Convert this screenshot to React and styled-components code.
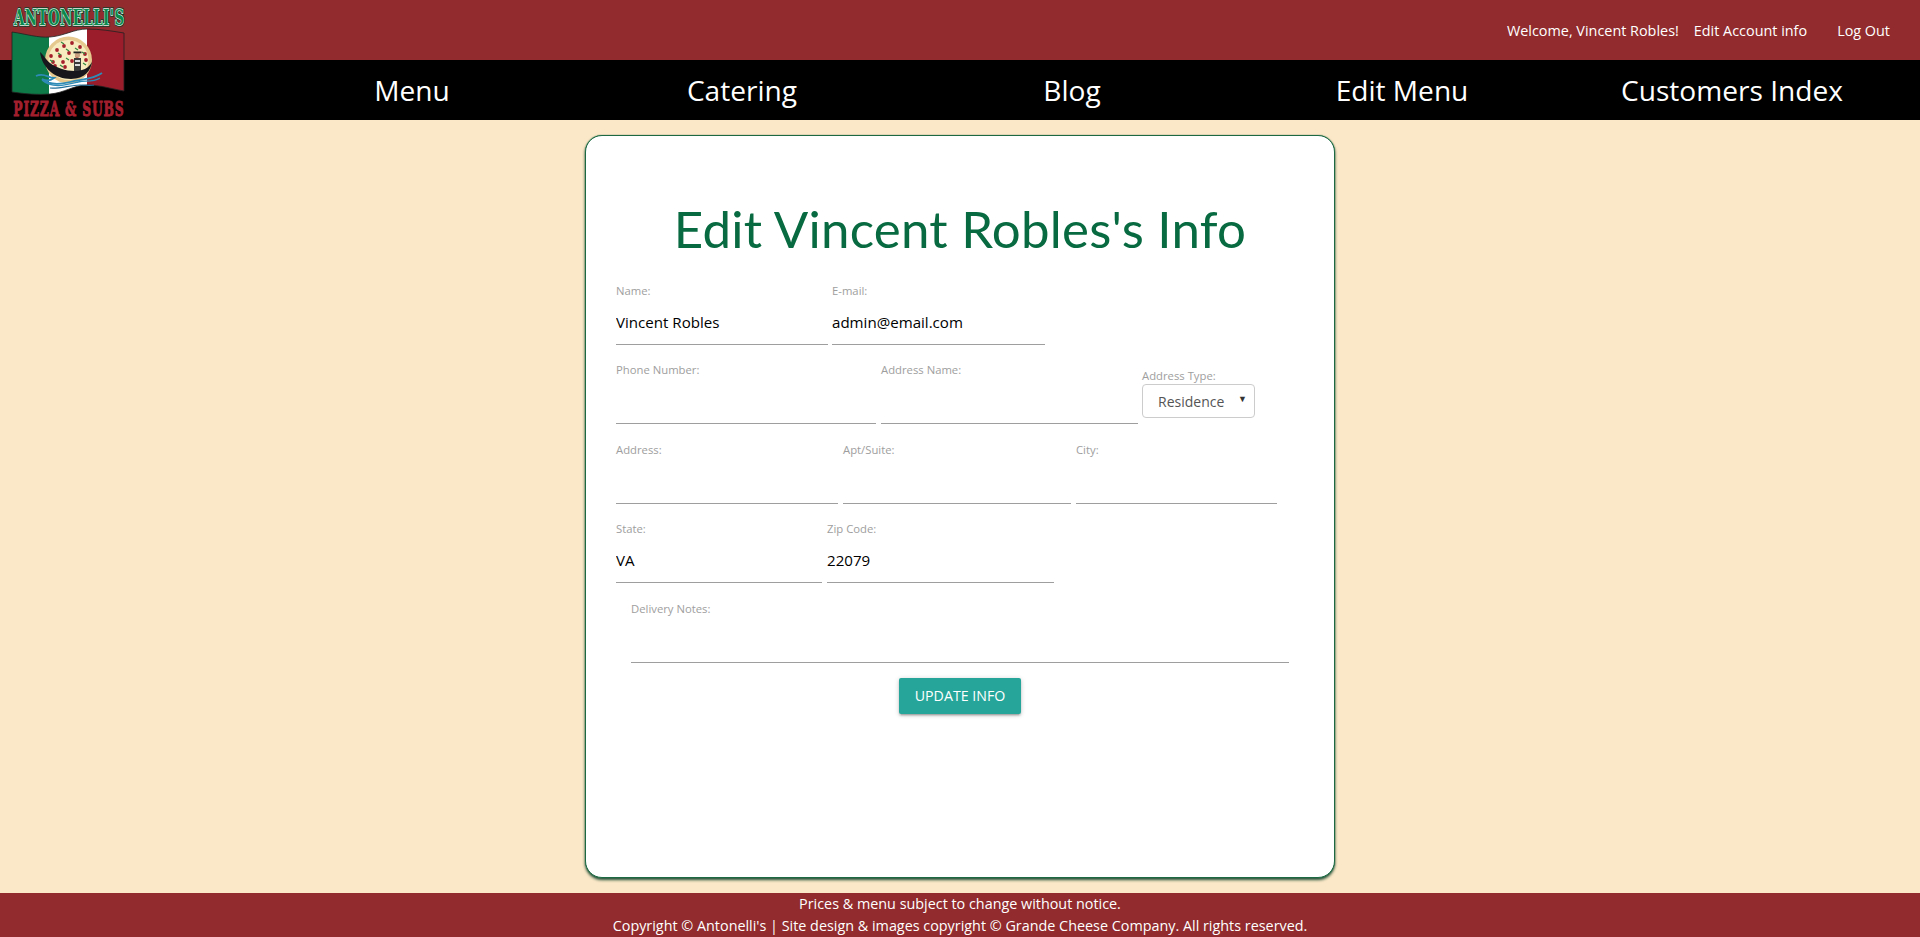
import React from "react";
import styled, { createGlobalStyle } from "styled-components";

const Global = createGlobalStyle`
  html, body { margin: 0; padding: 0; background: #fbe8c8; }
  body { font-family: "Open Sans", "Noto Sans", sans-serif; overflow: hidden; }
  * { box-sizing: border-box; }
`;
const Page = styled.div`
  position: relative;
  height: 937px;
  display: flex;
  flex-direction: column;
`;
const TopBar = styled.header`
  height: 60px;
  background: #912b2d;
  display: flex;
  align-items: center;
  justify-content: flex-end;
  padding: 0 30px 0 0;
  color: #fff;
  font-size: 14.4px;
`;
const TopLink = styled.a`
  color: #fff;
  margin-left: ${(p) => p.$gap}px;
`;
const NavBar = styled.nav`
  height: 60px;
  background: #000;
  display: grid;
  grid-template-columns: repeat(5, 330px);
  padding-left: 247px;
  align-items: center;
`;
const NavLink = styled.a`
  color: #fff;
  font-size: 28.1px;
  text-align: center;
  line-height: 60px;
`;
const LogoWrap = styled.svg`
  position: absolute;
  left: 0;
  top: 0;
  overflow: visible;
`;
const Main = styled.main`
  flex: 1;
  display: flex;
  justify-content: center;
  padding-top: 15px;
`;
const Card = styled.section`
  width: 750px;
  height: 743px;
  background: #fff;
  border: 1.5px solid #1d6a42;
  border-radius: 17px;
  box-shadow: 0 0 1px #1d6a42, 0 2px 3px #234f38;
  padding: 64px 0 0 30px;
`;
const Title = styled.h1`
  margin: -1px 0 24px -30px;
  font-family: "Lato", sans-serif;
  font-weight: 400;
  font-size: 51px;
  line-height: 60px;
  letter-spacing: 0.25px;
  text-align: center;
  color: #076a40;
`;
const Row = styled.div`
  display: flex;
  gap: ${(p) => p.$gap ?? 4}px;
  margin: 0 0 ${(p) => p.$after ?? 17}px ${(p) => p.$indent ?? 0}px;
`;
const Field = styled.div`
  width: ${(p) => p.$w}px;
  display: flex;
  flex-direction: column;
`;
const Label = styled.label`
  font-size: 11.3px;
  line-height: 16px;
  height: 16px;
  color: #9e9e9e;
`;
const Input = styled.input`
  height: 46px;
  width: 100%;
  border: 0;
  border-bottom: 1px solid #9e9e9e;
  padding: 1px 0 0;
  background: transparent;
  font-family: inherit;
  font-size: 15.1px;
  color: #000;
  outline: none;
`;
const SelectField = styled.div`
  width: 113px;
  margin: 6px 0 0 -1px;
  display: flex;
  flex-direction: column;
`;
const SelectBox = styled.div`
  position: relative;
  height: 34px;
  &::after {
    content: "▼";
    position: absolute;
    right: 8px;
    top: 8px;
    font-size: 9px;
    color: #333;
    pointer-events: none;
  }
`;
const Select = styled.select`
  appearance: none;
  width: 100%;
  height: 34px;
  border: 1px solid #ccc;
  border-radius: 4px;
  background: #fff;
  padding: 0 0 0 15px;
  font-family: inherit;
  font-size: 14px;
  color: #555;
`;
const Actions = styled.div`
  display: flex;
  justify-content: center;
  margin: -2px 0 0 -30px;
`;
const Button = styled.button`
  width: 122px;
  height: 36px;
  border: 0;
  border-radius: 2px;
  background: #26a69a;
  color: #fff;
  font-family: inherit;
  font-size: 14.2px;
  padding: 0 0 2px;
  text-transform: uppercase;
  box-shadow: 0 2px 2px rgba(0,0,0,.14), 0 3px 1px -2px rgba(0,0,0,.12), 0 1px 5px rgba(0,0,0,.2);
`;
const Footer = styled.footer`
  height: 44px;
  background: #912b2d;
  color: #fff;
  text-align: center;
  font-size: 14.37px;
  line-height: 22px;
`;

const FLAG = "M12 32 C26 34 38 38 50 37 C64 36 74 29 87 29 C100 29 112 31 124 33 L124 91 C112 89 100 85 87 85 C74 85 64 93 50 94 C38 95 26 94 12 92 Z";
const serif = "'DejaVu Serif', serif";

const Logo = () => (
  <LogoWrap width="130" height="120" viewBox="0 0 130 120" aria-label="Antonelli's Pizza & Subs">
    <defs>
      <clipPath id="flagClip"><path d={FLAG} /></clipPath>
    </defs>
    <g transform="translate(69 25) scale(.58 1)">
      <text textAnchor="middle" textLength="190" fontFamily={serif} fontWeight="700" fontSize="23" fill="#0b7f49" stroke="#163d2a" strokeWidth="3.4" paintOrder="stroke">ANTONELLI'S</text>
      <text textAnchor="middle" textLength="190" fontFamily={serif} fontWeight="700" fontSize="23" fill="#0b8a4e" stroke="#e9f3ec" strokeWidth="1.4" paintOrder="stroke">ANTONELLI'S</text>
    </g>
    <g clipPath="url(#flagClip)">
      <rect x="12" y="25" width="38" height="75" fill="#0d7a48" />
      <rect x="49" y="25" width="39" height="75" fill="#fff" />
      <rect x="87" y="25" width="38" height="75" fill="#9b1c2a" />
    </g>
    <path d={FLAG} fill="none" stroke="#222" strokeWidth="0.8" />
    <circle cx="68.5" cy="60" r="23.5" fill="#e6c98e" />
    <circle cx="68.5" cy="60" r="20" fill="#f7ecc0" />
    {[[57,50],[64,46],[72,43],[80,47],[85,54],[51,56],[60,56],[69,53],[77,56],[86,60],[53,62],[63,62],[72,61],[55,66],[65,67]].map(([x, y]) => (
      <circle key={`${x}-${y}`} cx={x} cy={y} r="1.9" fill="#a4202a" />
    ))}
    {[[61,42],[75,48],[58,53],[66,49],[82,52],[66,58],[50,60],[75,64],[60,65],[83,63]].map(([x, y]) => (
      <path key={`${x}-${y}`} d={`M${x} ${y} l3 2`} stroke="#2d8a3e" strokeWidth="1.1" />
    ))}
    <rect x="74" y="58" width="7" height="14" fill="#3a3a3a" />
    <rect x="75" y="60" width="5" height="2" fill="#ddd" />
    <rect x="75" y="64" width="5" height="2" fill="#ddd" />
    <circle cx="77.5" cy="55" r="2.6" fill="#c9a080" />
    <rect x="73.5" y="51.5" width="8" height="1.8" fill="#222" />
    <path d="M40 52 C43 54 46 60 50 63 C58 69 72 73 82 70 C86 69 90 66 92 62 C91 70 85 79 71 79 C55 79 42 68 40 52 Z" fill="#17171c" />
    <path d="M36 76 C44 72 48 78 54 78 C50 81 46 81 42 79 C50 86 62 84 70 82 C82 79 92 80 102 73" fill="none" stroke="#2e8bb8" strokeWidth="1.8" />
    <path d="M42 80 C52 89 66 85 78 82 C86 80 92 83 100 78" fill="none" stroke="#2e8bb8" strokeWidth="1.4" />
    <path d="M50 88 C60 89 70 85 80 85 C86 85 90 86 94 85" fill="none" stroke="#1f6e9a" strokeWidth="1.2" />
    <g transform="translate(68.5 116) scale(.62 1)">
      <text textAnchor="middle" textLength="178" fontFamily={serif} fontWeight="700" fontSize="20" fill="#a31f2e" stroke="#a31f2e" strokeWidth="0.9">PIZZA &amp; SUBS</text>
    </g>
  </LogoWrap>
);

const App = () => (
  <Page>
    <Global />
    <TopBar>
      <span>Welcome, Vincent Robles!</span>
      <TopLink $gap={15}>Edit Account info</TopLink>
      <TopLink $gap={30}>Log Out</TopLink>
    </TopBar>
    <NavBar>
      <NavLink>Menu</NavLink>
      <NavLink>Catering</NavLink>
      <NavLink>Blog</NavLink>
      <NavLink>Edit Menu</NavLink>
      <NavLink>Customers Index</NavLink>
    </NavBar>
    <Logo />
    <Main>
      <Card>
        <Title>Edit Vincent Robles's Info</Title>
        <Row>
          <Field $w={212}><Label>Name:</Label><Input readOnly value="Vincent Robles" /></Field>
          <Field $w={213}><Label>E-mail:</Label><Input readOnly value="admin@email.com" /></Field>
        </Row>
        <Row $gap={5} $after={18}>
          <Field $w={260}><Label>Phone Number:</Label><Input readOnly value="" /></Field>
          <Field $w={257}><Label>Address Name:</Label><Input readOnly value="" /></Field>
          <SelectField>
            <Label>Address Type:</Label>
            <SelectBox>
              <Select defaultValue="Residence"><option>Residence</option></Select>
            </SelectBox>
          </SelectField>
        </Row>
        <Row $gap={5}>
          <Field $w={222}><Label>Address:</Label><Input readOnly value="" /></Field>
          <Field $w={228}><Label>Apt/Suite:</Label><Input readOnly value="" /></Field>
          <Field $w={201}><Label>City:</Label><Input readOnly value="" /></Field>
        </Row>
        <Row $gap={5} $after={18}>
          <Field $w={206}><Label>State:</Label><Input readOnly value="VA" /></Field>
          <Field $w={227}><Label>Zip Code:</Label><Input readOnly value="22079" /></Field>
        </Row>
        <Row $indent={15}>
          <Field $w={658}><Label>Delivery Notes:</Label><Input readOnly value="" /></Field>
        </Row>
        <Actions><Button>Update Info</Button></Actions>
      </Card>
    </Main>
    <Footer>
      Prices &amp; menu subject to change without notice.<br />
      Copyright © Antonelli's | Site design &amp; images copyright © Grande Cheese Company. All rights reserved.
    </Footer>
  </Page>
);

export default App;
